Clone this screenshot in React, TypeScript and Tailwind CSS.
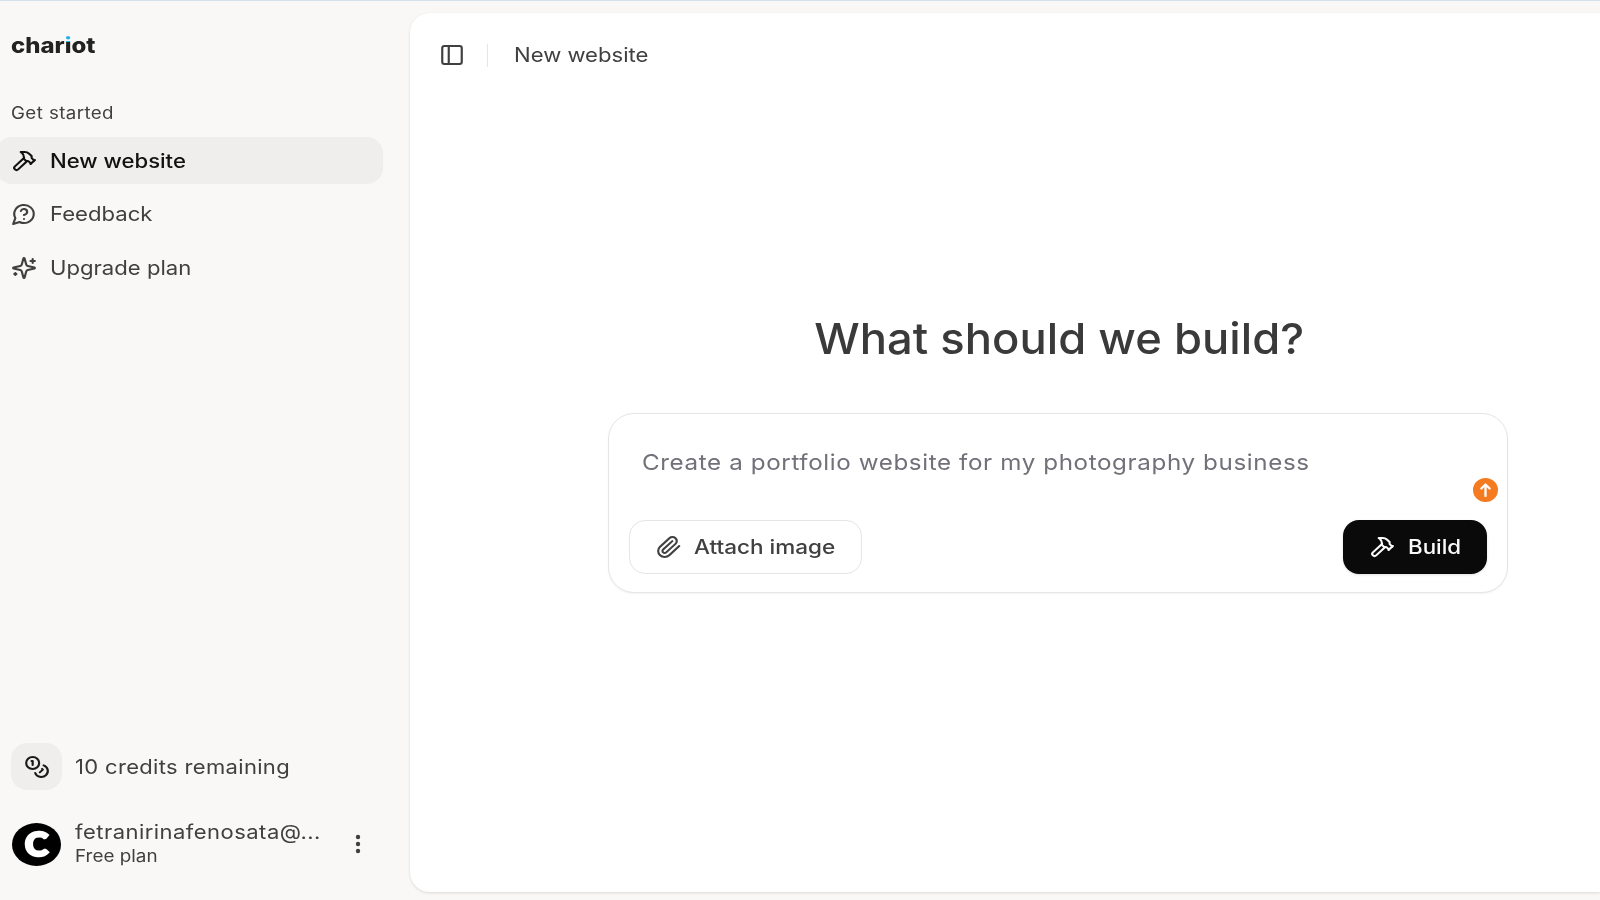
import type { ReactNode } from 'react';

type IconName = 'hammer' | 'feedback' | 'sparkles' | 'coins' | 'panel' | 'clip';

const icons: Record<IconName, ReactNode> = {
  hammer: (
    <>
      <path d="m15 12-8.373 8.373a1 1 0 1 1-3-3L12 9" />
      <path d="m18 15 4-4" />
      <path d="m21.5 11.5-1.914-1.914A2 2 0 0 1 19 8.172V7l-2.26-2.26a6 6 0 0 0-4.202-1.756L9 2.96l.92.82A6.18 6.18 0 0 1 12 8.4V10l2 2h1.172a2 2 0 0 1 1.414.586L18.5 14.5" />
    </>
  ),
  feedback: (
    <>
      <path d="M7.9 20A9 9 0 1 0 4 16.1L2 22Z" />
      <path d="M9.09 9a3 3 0 0 1 5.83 1c0 2-3 3-3 3" />
      <path d="M12 17h.01" />
    </>
  ),
  sparkles: (
    <>
      <path d="M9.937 15.5A2 2 0 0 0 8.5 14.063l-6.135-1.582a.5.5 0 0 1 0-.962L8.5 9.936A2 2 0 0 0 9.937 8.5l1.582-6.135a.5.5 0 0 1 .963 0L14.063 8.5A2 2 0 0 0 15.5 9.937l6.135 1.581a.5.5 0 0 1 0 .964L15.5 14.063a2 2 0 0 0-1.437 1.437l-1.582 6.135a.5.5 0 0 1-.963 0z" />
      <path d="M20 3v4" />
      <path d="M22 5h-4" />
      <path d="M4 17v2" />
      <path d="M5 18H3" />
    </>
  ),
  coins: (
    <>
      <circle cx="8" cy="8" r="6" />
      <path d="M18.09 10.37A6 6 0 1 1 10.34 18" />
      <path d="M7 6h1v4" />
      <path d="m16.71 13.88.7.71-2.82 2.82" />
    </>
  ),
  panel: (
    <>
      <rect width="18" height="18" x="3" y="3" rx="2" />
      <path d="M9 3v18" />
    </>
  ),
  clip: (
    <path d="m21.44 11.05-9.19 9.19a6 6 0 0 1-8.49-8.49l8.57-8.57A4 4 0 1 1 18 8.84l-8.59 8.57a2 2 0 0 1-2.83-2.83l8.49-8.48" />
  ),
};

function Icon({ name }: { name: IconName }) {
  return (
    <svg
      viewBox="0 0 24 24"
      preserveAspectRatio="none"
      className="w-[26px] h-6 shrink-0"
      fill="none"
      stroke="currentColor"
      strokeWidth="2"
      strokeLinecap="round"
      strokeLinejoin="round"
    >
      {icons[name]}
    </svg>
  );
}

const navItems: { icon: IconName; label: string; active?: boolean }[] = [
  { icon: 'hammer', label: 'New website', active: true },
  { icon: 'feedback', label: 'Feedback' },
  { icon: 'sparkles', label: 'Upgrade plan' },
];

function Sidebar() {
  return (
    <aside className="w-[410px] shrink-0 flex flex-col">
      <div className="mt-[31px] ml-[11px] h-7 flex items-center text-[21px] font-extrabold text-[#222] leading-7">
        <span className="inline-block origin-left scale-x-[1.14]">
          char
          <span className="bg-clip-text text-transparent bg-[linear-gradient(#1fb0ee_0_9px,#222_9px)]">i</span>
          ot
        </span>
      </div>

      <p className="mt-[41px] ml-[11px] h-6 leading-6 text-[17px] text-[#404040]">
        <span className="inline-block origin-left scale-x-[1.1] tracking-[0.022em]">Get started</span>
      </p>

      <nav className="mt-[12px] flex flex-col gap-[6.5px]">
        {navItems.map((item) => (
          <a
            key={item.label}
            className={`-ml-1 w-[387px] h-[47px] rounded-2xl pl-[15px] flex items-center gap-[13px] text-[20px] ${
              item.active ? 'bg-[#efeeed] text-[#111] font-medium' : 'text-[#404040]'
            }`}
          >
            <Icon name={item.icon} />
            <span className="inline-block origin-left scale-x-[1.105]">{item.label}</span>
          </a>
        ))}
      </nav>

      <div className="mt-auto ml-[11px] flex items-center gap-[13px]">
        <div className="w-[51px] h-[47px] rounded-2xl bg-[#efeeed] flex items-center justify-center text-[#1a1a1a]">
          <Icon name="coins" />
        </div>
        <span className="inline-block origin-left scale-x-[1.1] tracking-[0.015em] text-[20px] text-[#404040]">
          10 credits remaining
        </span>
      </div>

      <div className="mt-[30px] mb-[32px] ml-[12px] h-12 flex items-center">
        <div className="w-[49px] h-[43px] rounded-[50%] bg-black text-white flex items-center justify-center">
          <span className="font-['Lato'] font-black text-[32px] leading-none scale-x-[1.1] [-webkit-text-stroke:2.6px_white]">C</span>
        </div>
        <div className="ml-[14px] w-[271px] flex flex-col text-[#404040]">
          <span className="self-start origin-left scale-x-[1.1] tracking-[0.021em] text-[20px] leading-6">
            fetranirinafenosata@...
          </span>
          <span className="self-start origin-left scale-x-[1.11] text-[17px] leading-[25px]">Free plan</span>
        </div>
        <svg viewBox="0 0 24 24" className="w-6 h-6" fill="#404040">
          <circle cx="12" cy="5" r="2.2" />
          <circle cx="12" cy="12" r="2.2" />
          <circle cx="12" cy="19" r="2.2" />
        </svg>
      </div>
    </aside>
  );
}

function PromptCard() {
  return (
    <div className="relative mt-[45px] w-[900px] h-[180px] rounded-[26px] border border-[#e5e5e5] bg-white shadow-xs px-[20px] pt-[32px] pb-[18px] flex flex-col justify-between">
      <p className="pl-[13px] h-8 leading-8 text-[22px] text-[#71717a]">
        <span className="inline-block origin-left scale-x-[1.1] tracking-[0.025em] whitespace-nowrap">
          Create a portfolio website for my photography business
        </span>
      </p>
      <div className="flex items-center justify-between">
        <button className="w-[233px] h-[54px] rounded-2xl border border-[#e5e5e5] pl-[26px] flex items-center gap-[12px] text-[20px] font-medium text-[#404040]">
          <Icon name="clip" />
          <span className="inline-block origin-left scale-x-[1.125]">Attach image</span>
        </button>
        <button className="w-[144px] h-[54px] rounded-2xl bg-[#0a0a0a] pl-[26px] flex items-center gap-[13px] text-[20px] font-medium text-[#fafafa] shadow-sm">
          <Icon name="hammer" />
          <span className="inline-block origin-left scale-x-[1.115]">Build</span>
        </button>
      </div>
      <svg viewBox="0 0 24 24" preserveAspectRatio="none" className="absolute right-[9px] top-[64px] w-[25px] h-6">
        <circle cx="12" cy="12" r="12" fill="#f47b20" />
        <path d="M12 18V7M8 10.5 12 6.5l4 4" fill="none" stroke="#fff" strokeWidth="2.2" strokeLinecap="round" strokeLinejoin="round" />
      </svg>
    </div>
  );
}

export default function App() {
  return (
    <div className="w-[1600px] h-[900px] overflow-hidden flex bg-[#f9f8f7] border-t border-[#d5e0ea] font-['Inter',sans-serif]">
      <Sidebar />
      <main className="mt-3 mb-[8px] flex-1 bg-white rounded-l-[20px] shadow-[0_1px_3px_rgba(0,0,0,0.12)] flex flex-col">
        <header className="mt-[30px] ml-[29px] h-6 flex items-center text-[20px] text-[#404040]">
          <Icon name="panel" />
          <div className="ml-[22px] w-px h-[23px] bg-[#e5e5e5]" />
          <span className="ml-[26px] inline-block origin-left scale-x-[1.105]">New website</span>
        </header>
        <section className="mt-[241px] ml-[198px] w-[900px] flex flex-col items-center">
          <h1 className="pl-[2px] text-[43px] leading-[60px] font-medium text-[#3a3a3a] scale-x-[1.055]">What should we build?</h1>
          <PromptCard />
        </section>
      </main>
    </div>
  );
}
